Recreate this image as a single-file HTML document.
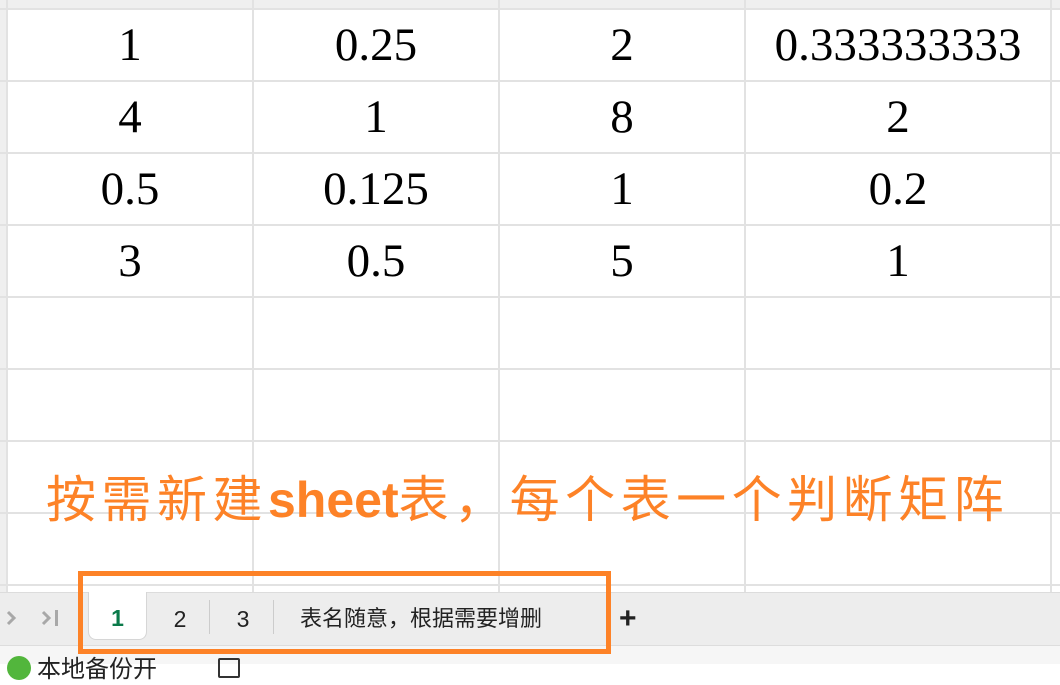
<!DOCTYPE html>
<html><head><meta charset="utf-8"><style>
*{margin:0;padding:0;box-sizing:border-box}
body{width:1060px;height:664px;overflow:hidden;background:#fff;position:relative;font-family:"Liberation Sans","Noto Sans CJK SC",sans-serif}
.hl{position:absolute;left:0;width:1060px;height:2px;background:#e2e2e2}
.vl{position:absolute;top:0;height:592px;width:2px;background:#e2e2e2}
.c{position:absolute;width:246px;height:72px;line-height:72px;text-align:center;font-family:"Liberation Serif",serif;font-size:47px;color:#000}
</style></head><body>
<div style="position:absolute;left:0;top:0;width:1060px;height:9px;background:#efefef"></div>
<div style="position:absolute;left:0;top:0;width:7px;height:592px;background:#efefef"></div>
<div class="hl" style="top:8px"></div><div class="hl" style="top:80px"></div><div class="hl" style="top:152px"></div><div class="hl" style="top:224px"></div><div class="hl" style="top:296px"></div><div class="hl" style="top:368px"></div><div class="hl" style="top:440px"></div><div class="hl" style="top:512px"></div><div class="hl" style="top:584px"></div>
<div class="vl" style="left:6px"></div><div class="vl" style="left:252px"></div><div class="vl" style="left:498px"></div><div class="vl" style="left:744px"></div><div class="vl" style="left:1050px"></div>
<div class="c" style="left:7px;top:9px">1</div><div class="c" style="left:253px;top:9px">0.25</div><div class="c" style="left:499px;top:9px">2</div><div class="c" style="left:745px;top:9px;width:306px">0.333333333</div>
<div class="c" style="left:7px;top:81px">4</div><div class="c" style="left:253px;top:81px">1</div><div class="c" style="left:499px;top:81px">8</div><div class="c" style="left:745px;top:81px;width:306px">2</div>
<div class="c" style="left:7px;top:153px">0.5</div><div class="c" style="left:253px;top:153px">0.125</div><div class="c" style="left:499px;top:153px">1</div><div class="c" style="left:745px;top:153px;width:306px">0.2</div>
<div class="c" style="left:7px;top:225px">3</div><div class="c" style="left:253px;top:225px">0.5</div><div class="c" style="left:499px;top:225px">5</div><div class="c" style="left:745px;top:225px;width:306px">1</div>
<div style="position:absolute;left:46px;top:470px;font-size:50px;line-height:60px;color:#fd8227;white-space:nowrap;letter-spacing:5.5px">按需新建<b style="letter-spacing:0">sheet</b>表，每个表一个判断矩阵</div>
<div style="position:absolute;left:0;top:592px;width:1060px;height:53px;background:#ededed;border-top:1px solid #dcdcdc"></div>
<svg style="position:absolute;left:0;top:605px" width="70" height="26"><path d="M8 7 L14 13 L8 19" fill="none" stroke="#a8a8a8" stroke-width="3"/><path d="M43 7 L49 13 L43 19" fill="none" stroke="#a8a8a8" stroke-width="3"/><rect x="55" y="5" width="3" height="16" fill="#a8a8a8"/></svg>
<div style="position:absolute;left:88px;top:592px;width:59px;height:48px;background:#fff;border-radius:0 0 8px 8px;border:1px solid #d6d6d6;border-top:none;text-align:center;line-height:52px;font-size:23px;color:#0b7a4a;font-weight:bold">1</div>
<div style="position:absolute;left:150px;top:592px;width:60px;line-height:54px;text-align:center;font-size:23px;color:#222">2</div>
<div style="position:absolute;left:209px;top:600px;width:1px;height:34px;background:#ccc"></div>
<div style="position:absolute;left:213px;top:592px;width:60px;line-height:54px;text-align:center;font-size:23px;color:#222">3</div>
<div style="position:absolute;left:273px;top:600px;width:1px;height:34px;background:#ccc"></div>
<div style="position:absolute;left:300px;top:592px;line-height:54px;font-size:22px;color:#222">表名随意，根据需要增删</div>
<div style="position:absolute;left:619px;top:592px;line-height:54px;font-size:30px;color:#222;font-weight:bold">+</div>
<div style="position:absolute;left:0;top:645px;width:1060px;height:19px;background:#f6f6f6;border-top:1px solid #ddd"></div>
<div style="position:absolute;left:7px;top:656px;width:24px;height:24px;border-radius:50%;background:#52b63c"></div>
<div style="position:absolute;left:37px;top:655px;font-size:24px;line-height:30px;color:#222;white-space:nowrap">本地备份开</div>
<div style="position:absolute;left:218px;top:658px;width:22px;height:20px;border:2px solid #333;border-radius:2px"></div>
<div style="position:absolute;left:78px;top:571px;width:533px;height:83px;border:5px solid #fd8227"></div>
</body></html>
